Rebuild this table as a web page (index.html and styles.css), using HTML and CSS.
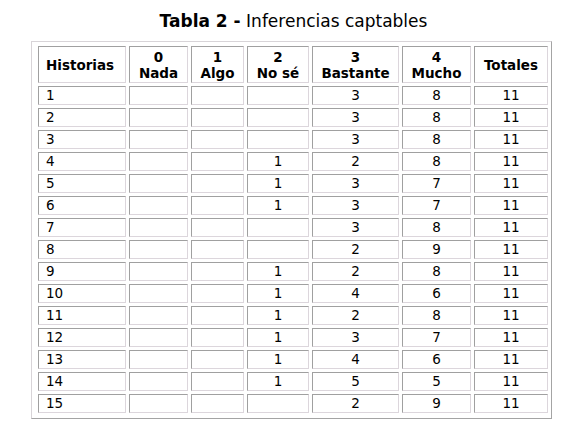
FILE: index.html
```html
<!DOCTYPE html>
<html lang="es">
<head>
<meta charset="utf-8">
<link rel="stylesheet" href="styles.css">
</head>
<body>
<div class="page">
  <h1 class="title"><b>Tabla 2 -</b> Inferencias captables</h1>
  <table class="data">
    <thead>
      <tr>
        <th class="c-hist">Historias</th>
        <th class="c-nada">0<br>Nada</th>
        <th class="c-algo">1<br>Algo</th>
        <th class="c-nose">2<br>No sé</th>
        <th class="c-bast">3<br>Bastante</th>
        <th class="c-much">4<br>Mucho</th>
        <th class="c-tot">Totales</th>
      </tr>
    </thead>
    <tbody>
      <tr><td class="h">1</td><td></td><td></td><td></td><td>3</td><td>8</td><td>11</td></tr>
      <tr><td class="h">2</td><td></td><td></td><td></td><td>3</td><td>8</td><td>11</td></tr>
      <tr><td class="h">3</td><td></td><td></td><td></td><td>3</td><td>8</td><td>11</td></tr>
      <tr><td class="h">4</td><td></td><td></td><td>1</td><td>2</td><td>8</td><td>11</td></tr>
      <tr><td class="h">5</td><td></td><td></td><td>1</td><td>3</td><td>7</td><td>11</td></tr>
      <tr><td class="h">6</td><td></td><td></td><td>1</td><td>3</td><td>7</td><td>11</td></tr>
      <tr><td class="h">7</td><td></td><td></td><td></td><td>3</td><td>8</td><td>11</td></tr>
      <tr><td class="h">8</td><td></td><td></td><td></td><td>2</td><td>9</td><td>11</td></tr>
      <tr><td class="h">9</td><td></td><td></td><td>1</td><td>2</td><td>8</td><td>11</td></tr>
      <tr><td class="h">10</td><td></td><td></td><td>1</td><td>4</td><td>6</td><td>11</td></tr>
      <tr><td class="h">11</td><td></td><td></td><td>1</td><td>2</td><td>8</td><td>11</td></tr>
      <tr><td class="h">12</td><td></td><td></td><td>1</td><td>3</td><td>7</td><td>11</td></tr>
      <tr><td class="h">13</td><td></td><td></td><td>1</td><td>4</td><td>6</td><td>11</td></tr>
      <tr><td class="h">14</td><td></td><td></td><td>1</td><td>5</td><td>5</td><td>11</td></tr>
      <tr><td class="h">15</td><td></td><td></td><td></td><td>2</td><td>9</td><td>11</td></tr>
    </tbody>
  </table>
</div>
</body>
</html>
```

FILE: styles.css
```css
html, body {
  margin: 0;
  padding: 0;
  background: #ffffff;
}

body {
  font-family: "DejaVu Sans", Verdana, sans-serif;
  color: #000;
}

.page {
  padding: 10px 0 0 31px;
  width: 521px;
}

.title {
  margin: 0 0 9px 0;
  font-size: 17px;
  font-weight: normal;
  line-height: 22px;
  text-align: center;
  padding-left: 4px;
}

.title b {
  font-weight: bold;
}

.data {
  border-collapse: separate;
  border-spacing: 3px;
  padding: 1px 0 2px 3px;
  table-layout: fixed;
  width: 521px;
  box-sizing: border-box;
  border: 1px solid;
  border-color: #d8d4d8 #a4a4a4 #a4a4a4 #d8d4d8;
  font-size: 13.5px;
}

.data th,
.data td {
  box-sizing: border-box;
  border: 1px solid;
  border-color: #a0a0a0 #dcd6dc #dcd6dc #a0a0a0;
  padding: 0 2px;
  text-align: center;
  vertical-align: middle;
}

.data th {
  height: 37px;
  font-weight: bold;
  line-height: 16px;
}

.data td {
  height: 19px;
  line-height: 15px;
}

.data th.c-hist,
.data td.h {
  text-align: left;
  padding-left: 7px;
}

.c-hist { width: 88px; }
.c-nada { width: 59px; }
.c-algo { width: 53px; }
.c-nose { width: 62px; }
.c-bast { width: 87px; }
.c-much { width: 69px; }
.c-tot  { width: 74px; }
```
